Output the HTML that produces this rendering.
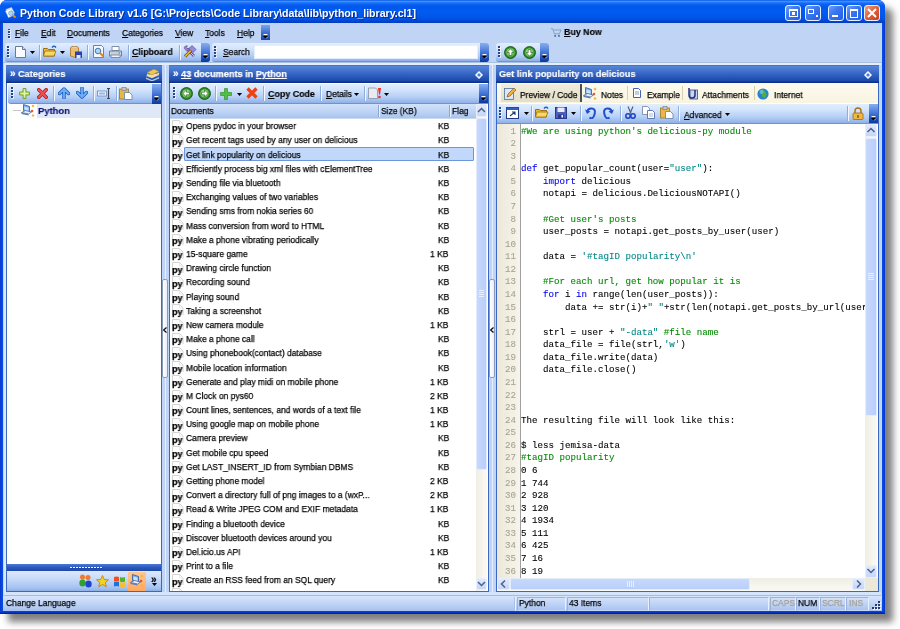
<!DOCTYPE html><html><head><meta charset="utf-8"><style>
*{margin:0;padding:0;box-sizing:border-box}
html,body{width:900px;height:629px;overflow:hidden;background:#fff;-webkit-font-smoothing:antialiased;font-family:"Liberation Sans",sans-serif;color:#000}
.a{position:absolute}
.t{white-space:pre;transform-origin:0 50%;will-change:transform;-webkit-text-stroke:0.25px currentColor}
u{text-decoration:underline;text-underline-offset:1px}
.code{position:absolute;font-family:"Liberation Mono",monospace;font-size:9.17px;line-height:12px;white-space:pre;-webkit-text-stroke:0.1px currentColor;will-change:transform}
.tb{background:linear-gradient(#e3eefe 0%,#d3e4fc 30%,#b4cef5 70%,#8fb1e8 100%);border-bottom:1px solid #6e92d2}
.chev{background:linear-gradient(#86aef0 0%,#4a7ad8 45%,#1c4eb8 80%,#0c3a9a 100%)}
.hdr{background:linear-gradient(#3060c0 0px,#5686d8 1px,#4272cc 6px,#2c5cbc 11px,#1c48a8 16px,#0a3090 17px,#0a3090 18px)}
.sep{position:absolute;width:2px;background:#8eaee0;border-right:1px solid #f4f8ff}
</style></head><body><div class="a " style="left:0px;top:0px;width:885px;height:614px;background:#0a3bd6;border-radius:7px 7px 0 0;box-shadow:8px 8px 7px rgba(0,0,0,0.5)"></div><div class="a " style="left:0px;top:0px;width:885px;height:23px;border-radius:7px 7px 0 0;background:linear-gradient(#0a5ae8 0px,#3a90ff 1.5px,#1a6cf8 3px,#0058ec 6px,#005cf2 12px,#0052e4 19px,#0040c8 22px,#0038c0 23px)"></div><div class="a " style="left:0px;top:23px;width:3px;height:591px;background:linear-gradient(90deg,#0a3ad0,#0650e8)"></div><div class="a " style="left:882px;top:23px;width:3px;height:591px;background:linear-gradient(90deg,#0650e8,#0a36c8)"></div><div class="a " style="left:0px;top:611px;width:885px;height:3px;background:linear-gradient(#0a48e0,#0030c0 60%,#001c98)"></div><div class="a " style="left:3px;top:23px;width:879px;height:588px;background:#c0d5f6"></div><svg class="a" style="left:5px;top:6px" width="13" height="13" viewBox="0 0 13 13"><path d="M1 3.5L6.5 1.5 9.5 7 4 10z" fill="#f4f6fc" stroke="#b8c4d8" stroke-width="0.6"/><path d="M0.5 5L6 3l3 6-5.5 2.5z" fill="#fff" stroke="#c0cce0" stroke-width="0.6"/><circle cx="5.8" cy="7.2" r="2.2" fill="#a8dcfc" stroke="#7aa0c8" stroke-width="0.8"/><path d="M7.6 9l3 2.5" stroke="#f08a10" stroke-width="2"/></svg><div class="a t" style="left:20px;top:7px;font-size:10.6px;line-height:12.6px;font-weight:bold;color:#fff;transform:scaleX(1);-webkit-text-stroke:0.15px currentColor;text-shadow:1px 1px 0 #0a2a90;-webkit-text-stroke:0">Python Code Library v1.6 [G:\Projects\Code Library\data\lib\python_library.cl1]</div><div class="a " style="left:785px;top:5px;width:16px;height:16px;border:1px solid #e8f0ff;border-radius:3px;background:linear-gradient(135deg,#6e9ff8 0%,#3d78f0 40%,#1f5ee8 100%)"></div><div class="a " style="left:805px;top:5px;width:16px;height:16px;border:1px solid #e8f0ff;border-radius:3px;background:linear-gradient(135deg,#6e9ff8 0%,#3d78f0 40%,#1f5ee8 100%)"></div><div class="a " style="left:828px;top:5px;width:16px;height:16px;border:1px solid #e8f0ff;border-radius:3px;background:linear-gradient(135deg,#6e9ff8 0%,#3d78f0 40%,#1f5ee8 100%)"></div><div class="a " style="left:846px;top:5px;width:16px;height:16px;border:1px solid #e8f0ff;border-radius:3px;background:linear-gradient(135deg,#6e9ff8 0%,#3d78f0 40%,#1f5ee8 100%)"></div><div class="a " style="left:864px;top:5px;width:16px;height:16px;border:1px solid #e8f0ff;border-radius:3px;background:linear-gradient(135deg,#f0a080 0%,#e06038 50%,#c84018 100%)"></div><div class="a " style="left:789px;top:9px;width:9px;height:8px;border:1.5px solid #fff;border-top-width:2px"></div><div class="a " style="left:792px;top:12px;width:3px;height:2.5px;background:#fff"></div><div class="a " style="left:808px;top:9px;width:6px;height:5px;border:1px solid #fff;background:#3a70e8;border-top-width:1.5px"></div><div class="a " style="left:815.5px;top:14.5px;width:2.5px;height:2.5px;background:#fff"></div><div class="a " style="left:831.5px;top:14.5px;width:6px;height:2.5px;background:#fff"></div><div class="a " style="left:849.5px;top:9px;width:8px;height:8.5px;border:1px solid #fff;border-top:2.5px solid #fff"></div><svg class="a" style="left:864px;top:5px" width="16" height="16"><path d="M4 4L12 12M12 4L4 12" stroke="#fff" stroke-width="2"/></svg><div class="a " style="left:7.5px;top:28.5px;width:2px;height:1.6px;background:#27458f;box-shadow:0.8px 0.8px 0 #fff"></div><div class="a " style="left:7.5px;top:31.0px;width:2px;height:1.6px;background:#27458f;box-shadow:0.8px 0.8px 0 #fff"></div><div class="a " style="left:7.5px;top:33.5px;width:2px;height:1.6px;background:#27458f;box-shadow:0.8px 0.8px 0 #fff"></div><div class="a " style="left:7.5px;top:36.0px;width:2px;height:1.6px;background:#27458f;box-shadow:0.8px 0.8px 0 #fff"></div><div class="a t" style="left:15px;top:27px;font-size:9.5px;line-height:11.5px;font-weight:normal;color:#000;transform:scaleX(0.89);"><u>F</u>ile</div><div class="a t" style="left:40.5px;top:27px;font-size:9.5px;line-height:11.5px;font-weight:normal;color:#000;transform:scaleX(0.89);"><u>E</u>dit</div><div class="a t" style="left:67px;top:27px;font-size:9.5px;line-height:11.5px;font-weight:normal;color:#000;transform:scaleX(0.89);"><u>D</u>ocuments</div><div class="a t" style="left:121.5px;top:27px;font-size:9.5px;line-height:11.5px;font-weight:normal;color:#000;transform:scaleX(0.89);"><u>C</u>ategories</div><div class="a t" style="left:175px;top:27px;font-size:9.5px;line-height:11.5px;font-weight:normal;color:#000;transform:scaleX(0.89);"><u>V</u>iew</div><div class="a t" style="left:205px;top:27px;font-size:9.5px;line-height:11.5px;font-weight:normal;color:#000;transform:scaleX(0.89);"><u>T</u>ools</div><div class="a t" style="left:237px;top:27px;font-size:9.5px;line-height:11.5px;font-weight:normal;color:#000;transform:scaleX(0.89);"><u>H</u>elp</div><div class="a " style="left:261px;top:25px;width:9px;height:15px;background:linear-gradient(#7aa4ec,#3566c8 60%,#1a46a8)"></div><svg class="a" style="left:262px;top:33.5px" width="7" height="6"><path d="M1.5 0.5h4" stroke="#fff" stroke-width="1"/><path d="M1 2h5L3.5 4.8z" fill="#000"/><path d="M4 4.5L6 2.5" stroke="#fff" stroke-width="0.6"/></svg><svg class="a" style="left:550px;top:27px" width="12" height="11" viewBox="0 0 14 13"><path d="M1 2h2l2 6h6l2-4.5H4" fill="none" stroke="#7a9ab8" stroke-width="1"/><circle cx="6" cy="10.5" r="1.2" fill="#5a7a98"/><circle cx="10.5" cy="10.5" r="1.2" fill="#5a7a98"/></svg><div class="a t" style="left:564px;top:25.8px;font-size:9.5px;line-height:11.5px;font-weight:bold;color:#000;transform:scaleX(0.93);-webkit-text-stroke:0.15px currentColor;"><u>B</u>uy Now</div><div class="a tb" style="left:5px;top:43px;width:205px;height:19px;border-radius:3px"></div><div class="a chev" style="left:201px;top:43px;width:9px;height:19px;border-radius:0 3px 3px 0"></div><svg class="a" style="left:202px;top:54px" width="7" height="6"><path d="M1.5 0.5h4" stroke="#fff" stroke-width="1"/><path d="M1 2h5L3.5 4.8z" fill="#000"/><path d="M4 4.5L6 2.5" stroke="#fff" stroke-width="0.6"/></svg><div class="a " style="left:7px;top:46.0px;width:2px;height:1.6px;background:#27458f;box-shadow:0.8px 0.8px 0 #fff"></div><div class="a " style="left:7px;top:49.1px;width:2px;height:1.6px;background:#27458f;box-shadow:0.8px 0.8px 0 #fff"></div><div class="a " style="left:7px;top:52.2px;width:2px;height:1.6px;background:#27458f;box-shadow:0.8px 0.8px 0 #fff"></div><div class="a " style="left:7px;top:55.3px;width:2px;height:1.6px;background:#27458f;box-shadow:0.8px 0.8px 0 #fff"></div><svg class="a" style="left:15px;top:46px" width="11" height="12"><path d="M0.5 0.5h7l3 3v8h-10z" fill="#fafcff" stroke="#6a7a90"/><path d="M7.5 0.5v3h3" fill="#d0d8e8" stroke="#6a7a90"/></svg><svg class="a" style="left:30px;top:51px" width="5" height="3"><path d="M0 0h5L2.5 3z" fill="#000"/></svg><div class="sep" style="left:39px;top:45px;height:15px"></div><svg class="a" style="left:43px;top:45px" width="14" height="12"><path d="M0.5 3.5h4l1 1h6v6.5h-11z" fill="#e8b830" stroke="#a07010"/><path d="M2 6h11l-2 5H0.5z" fill="#f8d860" stroke="#a07010" stroke-width="0.8"/><path d="M9 2.5q2-2.5 4 0" fill="none" stroke="#2060c0" stroke-width="1.3"/></svg><svg class="a" style="left:60px;top:51px" width="5" height="3"><path d="M0 0h5L2.5 3z" fill="#000"/></svg><svg class="a" style="left:70px;top:46px" width="12" height="12"><ellipse cx="4.5" cy="2" rx="4" ry="1.8" fill="#f0d090" stroke="#a07030" stroke-width="0.8"/><path d="M0.5 2v8q4 2.5 8 0V2" fill="#e8c070" stroke="#a07030" stroke-width="0.8"/><rect x="5" y="5.5" width="7" height="6.5" fill="#3040a8"/><rect x="6.5" y="9" width="4" height="3" fill="#e0e8f8"/></svg><div class="sep" style="left:87px;top:45px;height:15px"></div><svg class="a" style="left:93px;top:45px" width="12" height="13"><path d="M0.5 0.5h8l2 2v10h-10z" fill="#f4f8ff" stroke="#7080a0"/><circle cx="5" cy="6" r="2.8" fill="#a8d8f8" stroke="#4878a8"/><path d="M7 8l3.5 3.5" stroke="#e08020" stroke-width="1.8"/></svg><svg class="a" style="left:109px;top:46px" width="13" height="12"><path d="M3 0.5h7v4H3z" fill="#fff" stroke="#8090a8"/><path d="M0.5 5h12v5h-12z" fill="#c8d0dc" stroke="#7080a0"/><path d="M2 9h9v2.5H2z" fill="#f0f4f8" stroke="#8090a8"/><rect x="9.5" y="6.5" width="1.5" height="1" fill="#30a030"/></svg><div class="sep" style="left:128px;top:45px;height:15px"></div><div class="a t" style="left:132px;top:46.2px;font-size:9.5px;line-height:11.5px;font-weight:bold;color:#000;transform:scaleX(0.92);-webkit-text-stroke:0.15px currentColor;"><u>C</u>lipboard</div><div class="sep" style="left:179px;top:45px;height:15px"></div><svg class="a" style="left:183px;top:45px" width="14" height="13"><path d="M3.5 3.5L11 11" stroke="#6a5aa8" stroke-width="2.6"/><path d="M3.5 3.5L11 11" stroke="#c8c0f0" stroke-width="1"/><path d="M1 3A3 3 0 0 1 4.5 0.8L3.2 2.5 4.8 4 6.5 2.8A3 3 0 0 1 3.5 6z" fill="#9a88d8" stroke="#5a4a98" stroke-width="0.6"/><path d="M2 11.5L8 5.5" stroke="#403000" stroke-width="3"/><path d="M2 11.5L8 5.5" stroke="#f0b020" stroke-width="1.8"/><path d="M6 3.5L9 0.5 13 4.5 10 7.5z" fill="#9a88d8" stroke="#5a4a98" stroke-width="0.7"/></svg><div class="a tb" style="left:212px;top:43px;width:277px;height:19px;border-radius:3px"></div><div class="a chev" style="left:480px;top:43px;width:9px;height:19px;border-radius:0 3px 3px 0"></div><svg class="a" style="left:481px;top:54px" width="7" height="6"><path d="M1.5 0.5h4" stroke="#fff" stroke-width="1"/><path d="M1 2h5L3.5 4.8z" fill="#000"/><path d="M4 4.5L6 2.5" stroke="#fff" stroke-width="0.6"/></svg><div class="a " style="left:214px;top:46.0px;width:2px;height:1.6px;background:#27458f;box-shadow:0.8px 0.8px 0 #fff"></div><div class="a " style="left:214px;top:49.1px;width:2px;height:1.6px;background:#27458f;box-shadow:0.8px 0.8px 0 #fff"></div><div class="a " style="left:214px;top:52.2px;width:2px;height:1.6px;background:#27458f;box-shadow:0.8px 0.8px 0 #fff"></div><div class="a " style="left:214px;top:55.3px;width:2px;height:1.6px;background:#27458f;box-shadow:0.8px 0.8px 0 #fff"></div><div class="a t" style="left:223px;top:46.2px;font-size:9.5px;line-height:11.5px;font-weight:normal;color:#000;transform:scaleX(0.89);"><u>S</u>earch</div><div class="a " style="left:254px;top:45px;width:224px;height:14px;background:#fff;border:1px solid #e4eefc"></div><div class="a tb" style="left:496px;top:43px;width:53px;height:19px;border-radius:3px"></div><div class="a chev" style="left:540px;top:43px;width:9px;height:19px;border-radius:0 3px 3px 0"></div><svg class="a" style="left:541px;top:54px" width="7" height="6"><path d="M1.5 0.5h4" stroke="#fff" stroke-width="1"/><path d="M1 2h5L3.5 4.8z" fill="#000"/><path d="M4 4.5L6 2.5" stroke="#fff" stroke-width="0.6"/></svg><div class="a " style="left:498px;top:46.0px;width:2px;height:1.6px;background:#27458f;box-shadow:0.8px 0.8px 0 #fff"></div><div class="a " style="left:498px;top:49.1px;width:2px;height:1.6px;background:#27458f;box-shadow:0.8px 0.8px 0 #fff"></div><div class="a " style="left:498px;top:52.2px;width:2px;height:1.6px;background:#27458f;box-shadow:0.8px 0.8px 0 #fff"></div><div class="a " style="left:498px;top:55.3px;width:2px;height:1.6px;background:#27458f;box-shadow:0.8px 0.8px 0 #fff"></div><svg class="a" style="left:504px;top:46px" width="13" height="13"><defs><radialGradient id="gc" cx="0.45" cy="0.4" r="0.6"><stop offset="0" stop-color="#d8f8b0"/><stop offset="1" stop-color="#60b040"/></radialGradient></defs><circle cx="6.5" cy="6.5" r="6" fill="#2a8a2a" stroke="#0c500c" stroke-width="0.8"/><circle cx="6.5" cy="6.5" r="4.3" fill="url(#gc)"/><path d="M6.5 2.8L3 6.5h2.2v3h2.6v-3H10z" fill="#fff" stroke="#2a6a2a" stroke-width="0.7"/></svg><svg class="a" style="left:522.5px;top:46px" width="13" height="13"><defs><radialGradient id="gc" cx="0.45" cy="0.4" r="0.6"><stop offset="0" stop-color="#d8f8b0"/><stop offset="1" stop-color="#60b040"/></radialGradient></defs><circle cx="6.5" cy="6.5" r="6" fill="#2a8a2a" stroke="#0c500c" stroke-width="0.8"/><circle cx="6.5" cy="6.5" r="4.3" fill="url(#gc)"/><path d="M6.5 10.2L3 6.5h2.2v-3h2.6v3H10z" fill="#fff" stroke="#2a6a2a" stroke-width="0.7"/></svg><div class="a " style="left:3px;top:62px;width:879px;height:1px;background:#a8c0e4"></div><div class="a " style="left:4px;top:63px;width:877px;height:2px;background:#e2eefc"></div><div class="a " style="left:4px;top:592px;width:877px;height:4px;background:#d4e4fa;border-bottom:1px solid #a4bce4"></div><div class="a " style="left:4px;top:63px;width:2px;height:532px;background:#dceafc"></div><div class="a " style="left:164.5px;top:65px;width:1.5px;height:527px;background:#e6eefc"></div><div class="a " style="left:491.5px;top:65px;width:1.5px;height:527px;background:#e6eefc"></div><div class="a " style="left:6px;top:65px;width:156px;height:527px;background:#fff;border:1px solid #3b68c4"></div><div class="a hdr" style="left:6px;top:65px;width:156px;height:18px;"></div><div class="a t" style="left:9.5px;top:67.8px;font-size:10px;line-height:12px;font-weight:bold;color:#fff;transform:scaleX(1);-webkit-text-stroke:0.15px currentColor;">»</div><div class="a t" style="left:18px;top:67.8px;font-size:9.8px;line-height:11.8px;font-weight:bold;color:#fff;transform:scaleX(0.935);-webkit-text-stroke:0.15px currentColor;">Categories</div><svg class="a" style="left:145px;top:68px" width="15" height="13"><path d="M1 8l7-3 6 2-7 3z" fill="#e0e8f0" stroke="#8090a0" stroke-width="0.6"/><path d="M1 9.5l6 2.5 7-3v1.5l-7 3-6-2.5z" fill="#b8c8d8"/><path d="M2 4.5l7-3.5 5 2.5-7 3.5z" fill="#f0c850" stroke="#b08020" stroke-width="0.6"/><path d="M2 5.5l5 2.5 7-3.5v2l-7 3.5-5-2.5z" fill="#f8e0a0"/></svg><div class="a tb" style="left:8px;top:84px;width:153px;height:20px;border-radius:3px 0 0 3px"></div><div class="a chev" style="left:152px;top:84px;width:9px;height:20px;"></div><svg class="a" style="left:153px;top:96px" width="7" height="6"><path d="M1.5 0.5h4" stroke="#fff" stroke-width="1"/><path d="M1 2h5L3.5 4.8z" fill="#000"/><path d="M4 4.5L6 2.5" stroke="#fff" stroke-width="0.6"/></svg><div class="a " style="left:11px;top:87.0px;width:2px;height:1.6px;background:#27458f;box-shadow:0.8px 0.8px 0 #fff"></div><div class="a " style="left:11px;top:90.1px;width:2px;height:1.6px;background:#27458f;box-shadow:0.8px 0.8px 0 #fff"></div><div class="a " style="left:11px;top:93.2px;width:2px;height:1.6px;background:#27458f;box-shadow:0.8px 0.8px 0 #fff"></div><div class="a " style="left:11px;top:96.3px;width:2px;height:1.6px;background:#27458f;box-shadow:0.8px 0.8px 0 #fff"></div><svg class="a" style="left:18.5px;top:88px" width="11" height="11"><path d="M4 0.5h3v3.5h3.5v3H7v3.5H4V7H0.5V4H4z" fill="#c8e070" stroke="#78a830" stroke-width="1"/><path d="M5.5 2v7M2 5.5h7" stroke="#e8f0b0" stroke-width="1"/></svg><svg class="a" style="left:37px;top:88px" width="11" height="11"><path d="M1.8 1.8L9.2 9.2M9.2 1.8L1.8 9.2" stroke="#c01818" stroke-width="3.6" stroke-linecap="round"/><path d="M1.8 1.8L9.2 9.2M9.2 1.8L1.8 9.2" stroke="#f05050" stroke-width="2" stroke-linecap="round"/></svg><div class="sep" style="left:53px;top:86px;height:15px"></div><svg class="a" style="left:58px;top:87px" width="12" height="12"><path d="M1.5 6.5L6 2 10.5 6.5M6 2.5V11" fill="none" stroke="#1a58c0" stroke-width="3.4" stroke-linecap="round" stroke-linejoin="round"/><path d="M1.5 6.5L6 2 10.5 6.5M6 2.5V11" fill="none" stroke="#6ab0f8" stroke-width="1.8" stroke-linecap="round" stroke-linejoin="round"/></svg><svg class="a" style="left:76px;top:87px" width="12" height="12"><path d="M1.5 5.5L6 10 10.5 5.5M6 9.5V1" fill="none" stroke="#1a58c0" stroke-width="3.4" stroke-linecap="round" stroke-linejoin="round"/><path d="M1.5 5.5L6 10 10.5 5.5M6 9.5V1" fill="none" stroke="#6ab0f8" stroke-width="1.8" stroke-linecap="round" stroke-linejoin="round"/></svg><div class="sep" style="left:93px;top:86px;height:15px"></div><svg class="a" style="left:97px;top:88px" width="14" height="11"><rect x="0.5" y="3" width="9" height="5" fill="#f0f4fa" stroke="#7088b0" stroke-width="0.8"/><rect x="2" y="4.5" width="6" height="2" fill="#90b8f0"/><path d="M10 0.5h3M10 10.5h3M11.5 0.5v10" stroke="#404858" stroke-width="1.2"/></svg><div class="sep" style="left:116px;top:86px;height:15px"></div><svg class="a" style="left:119px;top:87px" width="14" height="13"><rect x="0.5" y="2" width="9" height="10" fill="#e8b848" stroke="#a07820" stroke-width="0.8"/><rect x="3" y="0.5" width="4" height="3" fill="#c0c8d0" stroke="#707880" stroke-width="0.6"/><path d="M5.5 5.5h5l2.5 2.5v4.5h-7.5z" fill="#fff" stroke="#6080a8" stroke-width="0.8"/></svg><div class="a " style="left:37px;top:104px;width:124px;height:14px;background:#dfe8f6"></div><div class="a " style="left:13px;top:110px;width:8px;height:1px;background:#c8c8c8"></div><svg class="a" style="left:21px;top:104px" width="15" height="14"><path d="M2.5 0.5l6 2v6l-6-2z" fill="#78b0f0" stroke="#2a5aa8" stroke-width="0.8"/><path d="M3.5 2.5l4 1.3v3.5l-4-1.3z" fill="#c8e4ff"/><path d="M0.5 8.5l7 1.5 3-2-6-1.5z" fill="#e8f0f8" stroke="#3a5a98" stroke-width="0.7"/><path d="M0.5 8.5l7 1.5v1.5l-7-1.5z" fill="#6080b8"/><path d="M12 0.5l1.5 1.5-1.5 1.5-1.5-1.5z" fill="#f8b030"/><path d="M11 5.5l1.5 1.5-1.5 1.5-1.5-1.5z" fill="#e04820"/><path d="M12 10l1.5 1.5-1.5 1.5-1.5-1.5z" fill="#f8b030"/></svg><div class="a t" style="left:38px;top:105.2px;font-size:9.8px;line-height:11.8px;font-weight:bold;color:#10107a;transform:scaleX(0.96);-webkit-text-stroke:0.15px currentColor;">Python</div><div class="a " style="left:7px;top:564px;width:154px;height:7px;background:linear-gradient(#4a7ad8,#2a58bc 50%,#1e48a8)"></div><div class="a " style="left:70px;top:566.5px;width:1.6px;height:1.6px;background:#f4f8ff;box-shadow:0.5px 0.5px 0 #10308a"></div><div class="a " style="left:73px;top:566.5px;width:1.6px;height:1.6px;background:#f4f8ff;box-shadow:0.5px 0.5px 0 #10308a"></div><div class="a " style="left:76px;top:566.5px;width:1.6px;height:1.6px;background:#f4f8ff;box-shadow:0.5px 0.5px 0 #10308a"></div><div class="a " style="left:79px;top:566.5px;width:1.6px;height:1.6px;background:#f4f8ff;box-shadow:0.5px 0.5px 0 #10308a"></div><div class="a " style="left:82px;top:566.5px;width:1.6px;height:1.6px;background:#f4f8ff;box-shadow:0.5px 0.5px 0 #10308a"></div><div class="a " style="left:85px;top:566.5px;width:1.6px;height:1.6px;background:#f4f8ff;box-shadow:0.5px 0.5px 0 #10308a"></div><div class="a " style="left:88px;top:566.5px;width:1.6px;height:1.6px;background:#f4f8ff;box-shadow:0.5px 0.5px 0 #10308a"></div><div class="a " style="left:91px;top:566.5px;width:1.6px;height:1.6px;background:#f4f8ff;box-shadow:0.5px 0.5px 0 #10308a"></div><div class="a " style="left:94px;top:566.5px;width:1.6px;height:1.6px;background:#f4f8ff;box-shadow:0.5px 0.5px 0 #10308a"></div><div class="a " style="left:97px;top:566.5px;width:1.6px;height:1.6px;background:#f4f8ff;box-shadow:0.5px 0.5px 0 #10308a"></div><div class="a " style="left:100px;top:566.5px;width:1.6px;height:1.6px;background:#f4f8ff;box-shadow:0.5px 0.5px 0 #10308a"></div><div class="a " style="left:7px;top:571px;width:154px;height:20px;background:linear-gradient(#dde9fc 0%,#c6daf8 40%,#a4c2f0 85%,#8cb0e6 100%)"></div><div class="a " style="left:128px;top:572px;width:18px;height:19px;background:linear-gradient(#ffc890,#ffa860)"></div><svg class="a" style="left:79px;top:574px" width="13" height="14"><circle cx="3.5" cy="3" r="2.5" fill="#f07a30"/><circle cx="9" cy="3.5" r="2.5" fill="#f07a30"/><ellipse cx="3.5" cy="9" rx="3.2" ry="3.5" fill="#30a030"/><ellipse cx="9.5" cy="10" rx="3.2" ry="3.5" fill="#2040d0"/></svg><svg class="a" style="left:96px;top:575px" width="13" height="13"><path d="M6.5 0.5l1.8 4 4.2 0.3-3.2 2.8 1 4.2-3.8-2.3-3.8 2.3 1-4.2L0.5 4.8l4.2-0.3z" fill="#f8d020" stroke="#b08010" stroke-width="0.8"/></svg><svg class="a" style="left:113px;top:575px" width="13" height="13"><path d="M1 2q2.5-1 5 0v4.5q-2.5-1-5 0z" fill="#f05020"/><path d="M7 2q2.5 1 5 0v4.5q-2.5 1-5 0z" fill="#50b030"/><path d="M1 7q2.5-1 5 0v4.5q-2.5-1-5 0z" fill="#2070e0"/><path d="M7 7q2.5 1 5 0v4.5q-2.5 1-5 0z" fill="#f8c020"/></svg><svg class="a" style="left:130px;top:574px" width="15" height="14"><path d="M2.5 0.5l6 2v6l-6-2z" fill="#78b0f0" stroke="#2a5aa8" stroke-width="0.8"/><path d="M3.5 2.5l4 1.3v3.5l-4-1.3z" fill="#c8e4ff"/><path d="M0.5 8.5l7 1.5 3-2-6-1.5z" fill="#e8f0f8" stroke="#3a5a98" stroke-width="0.7"/><path d="M0.5 8.5l7 1.5v1.5l-7-1.5z" fill="#6080b8"/><path d="M12 0.5l1.5 1.5-1.5 1.5-1.5-1.5z" fill="#f8b030"/><path d="M11 5.5l1.5 1.5-1.5 1.5-1.5-1.5z" fill="#e04820"/><path d="M12 10l1.5 1.5-1.5 1.5-1.5-1.5z" fill="#f8b030"/></svg><div class="a t" style="left:151px;top:573.5px;font-size:10px;line-height:12px;font-weight:bold;color:#000;transform:scaleX(1);-webkit-text-stroke:0.15px currentColor;">»</div><svg class="a" style="left:152px;top:583px" width="5" height="3"><path d="M0 0h5L2.5 3z" fill="#000"/></svg><div class="a " style="left:162px;top:279px;width:6px;height:99px;background:linear-gradient(90deg,#fff,#e8eef8);border:1px solid #8a9ab8;border-radius:2px"></div><svg class="a" style="left:163px;top:327px" width="4" height="6"><path d="M3.5 0.5L0.5 3l3 2.5" fill="none" stroke="#000" stroke-width="1.2"/></svg><div class="a " style="left:169px;top:65px;width:320px;height:527px;background:#fff;border:1px solid #3b68c4"></div><div class="a hdr" style="left:169px;top:65px;width:320px;height:18px;"></div><div class="a t" style="left:172.5px;top:67.6px;font-size:10px;line-height:12px;font-weight:bold;color:#fff;transform:scaleX(1);-webkit-text-stroke:0.15px currentColor;">»</div><div class="a t" style="left:181px;top:67.6px;font-size:9.8px;line-height:11.8px;font-weight:bold;color:#fff;transform:scaleX(0.935)"><u>43</u> documents in <u>Python</u></div><svg class="a" style="left:473.5px;top:70px" width="10" height="10"><path d="M5 1L9 5 5 9 1 5z" fill="#fff"/><path d="M5 3L7 5 5 7 3 5z" fill="#4a80e0"/></svg><div class="a tb" style="left:170px;top:84px;width:318px;height:20px;"></div><div class="a chev" style="left:479px;top:84px;width:9px;height:19px;"></div><svg class="a" style="left:480px;top:96px" width="7" height="6"><path d="M1.5 0.5h4" stroke="#fff" stroke-width="1"/><path d="M1 2h5L3.5 4.8z" fill="#000"/><path d="M4 4.5L6 2.5" stroke="#fff" stroke-width="0.6"/></svg><div class="a " style="left:173px;top:87.0px;width:2px;height:1.6px;background:#27458f;box-shadow:0.8px 0.8px 0 #fff"></div><div class="a " style="left:173px;top:90.1px;width:2px;height:1.6px;background:#27458f;box-shadow:0.8px 0.8px 0 #fff"></div><div class="a " style="left:173px;top:93.2px;width:2px;height:1.6px;background:#27458f;box-shadow:0.8px 0.8px 0 #fff"></div><div class="a " style="left:173px;top:96.3px;width:2px;height:1.6px;background:#27458f;box-shadow:0.8px 0.8px 0 #fff"></div><svg class="a" style="left:180px;top:87px" width="13" height="13"><defs><radialGradient id="gc" cx="0.45" cy="0.4" r="0.6"><stop offset="0" stop-color="#d8f8b0"/><stop offset="1" stop-color="#60b040"/></radialGradient></defs><circle cx="6.5" cy="6.5" r="6" fill="#2a8a2a" stroke="#0c500c" stroke-width="0.8"/><circle cx="6.5" cy="6.5" r="4.3" fill="url(#gc)"/><path d="M2.8 6.5L6.5 3v2.2h3v2.6h-3V10z" fill="#fff" stroke="#2a6a2a" stroke-width="0.7"/></svg><svg class="a" style="left:198px;top:87px" width="13" height="13"><defs><radialGradient id="gc" cx="0.45" cy="0.4" r="0.6"><stop offset="0" stop-color="#d8f8b0"/><stop offset="1" stop-color="#60b040"/></radialGradient></defs><circle cx="6.5" cy="6.5" r="6" fill="#2a8a2a" stroke="#0c500c" stroke-width="0.8"/><circle cx="6.5" cy="6.5" r="4.3" fill="url(#gc)"/><path d="M10.2 6.5L6.5 3v2.2h-3v2.6h3V10z" fill="#fff" stroke="#2a6a2a" stroke-width="0.7"/></svg><div class="sep" style="left:215px;top:86px;height:15px"></div><svg class="a" style="left:220px;top:88px" width="12" height="12"><path d="M4.5 0.5h3v4h4v3h-4v4h-3v-4h-4v-3h4z" fill="#50c040" stroke="#2a8a20" stroke-width="0.6"/></svg><svg class="a" style="left:237px;top:93px" width="5" height="3"><path d="M0 0h5L2.5 3z" fill="#000"/></svg><svg class="a" style="left:246px;top:87px" width="12" height="12"><path d="M1.5 1.5L10.5 10.5M10.5 1.5L1.5 10.5" stroke="#f04010" stroke-width="3.2"/></svg><div class="sep" style="left:263px;top:86px;height:15px"></div><div class="a t" style="left:268px;top:88px;font-size:9.5px;line-height:11.5px;font-weight:bold;color:#000;transform:scaleX(0.935);-webkit-text-stroke:0.15px currentColor;"><u>C</u>opy Code</div><div class="sep" style="left:320px;top:86px;height:15px"></div><div class="a t" style="left:326px;top:88px;font-size:9.5px;line-height:11.5px;font-weight:normal;color:#000;transform:scaleX(0.89);"><u>D</u>etails</div><svg class="a" style="left:354px;top:93px" width="5" height="3"><path d="M0 0h5L2.5 3z" fill="#000"/></svg><div class="sep" style="left:364px;top:86px;height:15px"></div><svg class="a" style="left:368px;top:87px" width="14" height="12"><path d="M0.5 1h7l2 2v8.5h-9z" fill="#e8ecf0" stroke="#8890a0" stroke-width="0.8"/><path d="M10 1h3l-1 6.5h-1z" fill="#f03020"/><circle cx="11.5" cy="10" r="1.3" fill="#f03020"/></svg><svg class="a" style="left:384px;top:93px" width="5" height="3"><path d="M0 0h5L2.5 3z" fill="#000"/></svg><div class="a " style="left:170px;top:104px;width:306px;height:15px;background:linear-gradient(#d2e2fa,#bcd2f4 60%,#a8c4ee);border-bottom:1px solid #c8d8f0"></div><div class="a " style="left:378px;top:105px;width:1px;height:12px;background:#8aa8d8;border-right:1px solid #e8f0fc;width:2px"></div><div class="a " style="left:449px;top:105px;width:1px;height:12px;background:#8aa8d8;border-right:1px solid #e8f0fc;width:2px"></div><div class="a t" style="left:171px;top:105px;font-size:9.5px;line-height:11.5px;font-weight:normal;color:#000;transform:scaleX(0.89);">Documents</div><div class="a t" style="left:381px;top:105px;font-size:9.5px;line-height:11.5px;font-weight:normal;color:#000;transform:scaleX(0.89);">Size (KB)</div><div class="a t" style="left:452px;top:105px;font-size:9.5px;line-height:11.5px;font-weight:normal;color:#000;transform:scaleX(0.89);">Flag</div><div class="a" style="left:170px;top:118px;width:306px;height:473px;overflow:hidden"><svg class="a" style="left:1px;top:1.00px" width="14" height="13"><path d="M1.5 12V1.5h7l3.5 3.5V12" fill="none" stroke="#d4d4d4" stroke-width="1"/><path d="M8.5 1.5v3.5h3.5" fill="none" stroke="#e4e4e4" stroke-width="0.8"/></svg><div class="a t" style="left:2px;top:3.60px;font-size:9.5px;line-height:11px;font-weight:bold;transform:scaleX(0.95)">py</div><div class="a t" style="left:15.5px;top:2.30px;font-size:9.5px;line-height:11px;transform:scaleX(0.89)">Opens pydoc in your browser</div><div class="a t" style="left:268px;top:2.30px;font-size:9.5px;line-height:11px;transform:scaleX(0.89)">KB</div><svg class="a" style="left:1px;top:15.19px" width="14" height="13"><path d="M1.5 12V1.5h7l3.5 3.5V12" fill="none" stroke="#d4d4d4" stroke-width="1"/><path d="M8.5 1.5v3.5h3.5" fill="none" stroke="#e4e4e4" stroke-width="0.8"/></svg><div class="a t" style="left:2px;top:17.79px;font-size:9.5px;line-height:11px;font-weight:bold;transform:scaleX(0.95)">py</div><div class="a t" style="left:15.5px;top:16.49px;font-size:9.5px;line-height:11px;transform:scaleX(0.89)">Get recent tags used by any user on delicious</div><div class="a t" style="left:268px;top:16.49px;font-size:9.5px;line-height:11px;transform:scaleX(0.89)">KB</div><div class="a" style="left:14px;top:28.88px;width:290px;height:14px;background:#c2d8fb;border:1px solid #6a96e0;border-radius:1px"></div><svg class="a" style="left:1px;top:29.38px" width="14" height="13"><path d="M1.5 12V1.5h7l3.5 3.5V12" fill="none" stroke="#d4d4d4" stroke-width="1"/><path d="M8.5 1.5v3.5h3.5" fill="none" stroke="#e4e4e4" stroke-width="0.8"/></svg><div class="a t" style="left:2px;top:31.98px;font-size:9.5px;line-height:11px;font-weight:bold;transform:scaleX(0.95)">py</div><div class="a t" style="left:15.5px;top:30.68px;font-size:9.5px;line-height:11px;transform:scaleX(0.89)">Get link popularity on delicious</div><div class="a t" style="left:268px;top:30.68px;font-size:9.5px;line-height:11px;transform:scaleX(0.89)">KB</div><svg class="a" style="left:1px;top:43.57px" width="14" height="13"><path d="M1.5 12V1.5h7l3.5 3.5V12" fill="none" stroke="#d4d4d4" stroke-width="1"/><path d="M8.5 1.5v3.5h3.5" fill="none" stroke="#e4e4e4" stroke-width="0.8"/></svg><div class="a t" style="left:2px;top:46.17px;font-size:9.5px;line-height:11px;font-weight:bold;transform:scaleX(0.95)">py</div><div class="a t" style="left:15.5px;top:44.87px;font-size:9.5px;line-height:11px;transform:scaleX(0.89)">Efficiently process big xml files with cElementTree</div><div class="a t" style="left:268px;top:44.87px;font-size:9.5px;line-height:11px;transform:scaleX(0.89)">KB</div><svg class="a" style="left:1px;top:57.76px" width="14" height="13"><path d="M1.5 12V1.5h7l3.5 3.5V12" fill="none" stroke="#d4d4d4" stroke-width="1"/><path d="M8.5 1.5v3.5h3.5" fill="none" stroke="#e4e4e4" stroke-width="0.8"/></svg><div class="a t" style="left:2px;top:60.36px;font-size:9.5px;line-height:11px;font-weight:bold;transform:scaleX(0.95)">py</div><div class="a t" style="left:15.5px;top:59.06px;font-size:9.5px;line-height:11px;transform:scaleX(0.89)">Sending file via bluetooth</div><div class="a t" style="left:268px;top:59.06px;font-size:9.5px;line-height:11px;transform:scaleX(0.89)">KB</div><svg class="a" style="left:1px;top:71.95px" width="14" height="13"><path d="M1.5 12V1.5h7l3.5 3.5V12" fill="none" stroke="#d4d4d4" stroke-width="1"/><path d="M8.5 1.5v3.5h3.5" fill="none" stroke="#e4e4e4" stroke-width="0.8"/></svg><div class="a t" style="left:2px;top:74.55px;font-size:9.5px;line-height:11px;font-weight:bold;transform:scaleX(0.95)">py</div><div class="a t" style="left:15.5px;top:73.25px;font-size:9.5px;line-height:11px;transform:scaleX(0.89)">Exchanging values of two variables</div><div class="a t" style="left:268px;top:73.25px;font-size:9.5px;line-height:11px;transform:scaleX(0.89)">KB</div><svg class="a" style="left:1px;top:86.14px" width="14" height="13"><path d="M1.5 12V1.5h7l3.5 3.5V12" fill="none" stroke="#d4d4d4" stroke-width="1"/><path d="M8.5 1.5v3.5h3.5" fill="none" stroke="#e4e4e4" stroke-width="0.8"/></svg><div class="a t" style="left:2px;top:88.74px;font-size:9.5px;line-height:11px;font-weight:bold;transform:scaleX(0.95)">py</div><div class="a t" style="left:15.5px;top:87.44px;font-size:9.5px;line-height:11px;transform:scaleX(0.89)">Sending sms from nokia series 60</div><div class="a t" style="left:268px;top:87.44px;font-size:9.5px;line-height:11px;transform:scaleX(0.89)">KB</div><svg class="a" style="left:1px;top:100.33px" width="14" height="13"><path d="M1.5 12V1.5h7l3.5 3.5V12" fill="none" stroke="#d4d4d4" stroke-width="1"/><path d="M8.5 1.5v3.5h3.5" fill="none" stroke="#e4e4e4" stroke-width="0.8"/></svg><div class="a t" style="left:2px;top:102.93px;font-size:9.5px;line-height:11px;font-weight:bold;transform:scaleX(0.95)">py</div><div class="a t" style="left:15.5px;top:101.63px;font-size:9.5px;line-height:11px;transform:scaleX(0.89)">Mass conversion from word to HTML</div><div class="a t" style="left:268px;top:101.63px;font-size:9.5px;line-height:11px;transform:scaleX(0.89)">KB</div><svg class="a" style="left:1px;top:114.52px" width="14" height="13"><path d="M1.5 12V1.5h7l3.5 3.5V12" fill="none" stroke="#d4d4d4" stroke-width="1"/><path d="M8.5 1.5v3.5h3.5" fill="none" stroke="#e4e4e4" stroke-width="0.8"/></svg><div class="a t" style="left:2px;top:117.12px;font-size:9.5px;line-height:11px;font-weight:bold;transform:scaleX(0.95)">py</div><div class="a t" style="left:15.5px;top:115.82px;font-size:9.5px;line-height:11px;transform:scaleX(0.89)">Make a phone vibrating periodically</div><div class="a t" style="left:268px;top:115.82px;font-size:9.5px;line-height:11px;transform:scaleX(0.89)">KB</div><svg class="a" style="left:1px;top:128.71px" width="14" height="13"><path d="M1.5 12V1.5h7l3.5 3.5V12" fill="none" stroke="#d4d4d4" stroke-width="1"/><path d="M8.5 1.5v3.5h3.5" fill="none" stroke="#e4e4e4" stroke-width="0.8"/></svg><div class="a t" style="left:2px;top:131.31px;font-size:9.5px;line-height:11px;font-weight:bold;transform:scaleX(0.95)">py</div><div class="a t" style="left:15.5px;top:130.01px;font-size:9.5px;line-height:11px;transform:scaleX(0.89)">15-square game</div><div class="a t" style="left:259.5px;top:130.01px;font-size:9.5px;line-height:11px;transform:scaleX(0.89)">1 KB</div><svg class="a" style="left:1px;top:142.90px" width="14" height="13"><path d="M1.5 12V1.5h7l3.5 3.5V12" fill="none" stroke="#d4d4d4" stroke-width="1"/><path d="M8.5 1.5v3.5h3.5" fill="none" stroke="#e4e4e4" stroke-width="0.8"/></svg><div class="a t" style="left:2px;top:145.50px;font-size:9.5px;line-height:11px;font-weight:bold;transform:scaleX(0.95)">py</div><div class="a t" style="left:15.5px;top:144.20px;font-size:9.5px;line-height:11px;transform:scaleX(0.89)">Drawing circle function</div><div class="a t" style="left:268px;top:144.20px;font-size:9.5px;line-height:11px;transform:scaleX(0.89)">KB</div><svg class="a" style="left:1px;top:157.09px" width="14" height="13"><path d="M1.5 12V1.5h7l3.5 3.5V12" fill="none" stroke="#d4d4d4" stroke-width="1"/><path d="M8.5 1.5v3.5h3.5" fill="none" stroke="#e4e4e4" stroke-width="0.8"/></svg><div class="a t" style="left:2px;top:159.69px;font-size:9.5px;line-height:11px;font-weight:bold;transform:scaleX(0.95)">py</div><div class="a t" style="left:15.5px;top:158.39px;font-size:9.5px;line-height:11px;transform:scaleX(0.89)">Recording sound</div><div class="a t" style="left:268px;top:158.39px;font-size:9.5px;line-height:11px;transform:scaleX(0.89)">KB</div><svg class="a" style="left:1px;top:171.28px" width="14" height="13"><path d="M1.5 12V1.5h7l3.5 3.5V12" fill="none" stroke="#d4d4d4" stroke-width="1"/><path d="M8.5 1.5v3.5h3.5" fill="none" stroke="#e4e4e4" stroke-width="0.8"/></svg><div class="a t" style="left:2px;top:173.88px;font-size:9.5px;line-height:11px;font-weight:bold;transform:scaleX(0.95)">py</div><div class="a t" style="left:15.5px;top:172.58px;font-size:9.5px;line-height:11px;transform:scaleX(0.89)">Playing sound</div><div class="a t" style="left:268px;top:172.58px;font-size:9.5px;line-height:11px;transform:scaleX(0.89)">KB</div><svg class="a" style="left:1px;top:185.47px" width="14" height="13"><path d="M1.5 12V1.5h7l3.5 3.5V12" fill="none" stroke="#d4d4d4" stroke-width="1"/><path d="M8.5 1.5v3.5h3.5" fill="none" stroke="#e4e4e4" stroke-width="0.8"/></svg><div class="a t" style="left:2px;top:188.07px;font-size:9.5px;line-height:11px;font-weight:bold;transform:scaleX(0.95)">py</div><div class="a t" style="left:15.5px;top:186.77px;font-size:9.5px;line-height:11px;transform:scaleX(0.89)">Taking a screenshot</div><div class="a t" style="left:268px;top:186.77px;font-size:9.5px;line-height:11px;transform:scaleX(0.89)">KB</div><svg class="a" style="left:1px;top:199.66px" width="14" height="13"><path d="M1.5 12V1.5h7l3.5 3.5V12" fill="none" stroke="#d4d4d4" stroke-width="1"/><path d="M8.5 1.5v3.5h3.5" fill="none" stroke="#e4e4e4" stroke-width="0.8"/></svg><div class="a t" style="left:2px;top:202.26px;font-size:9.5px;line-height:11px;font-weight:bold;transform:scaleX(0.95)">py</div><div class="a t" style="left:15.5px;top:200.96px;font-size:9.5px;line-height:11px;transform:scaleX(0.89)">New camera module</div><div class="a t" style="left:259.5px;top:200.96px;font-size:9.5px;line-height:11px;transform:scaleX(0.89)">1 KB</div><svg class="a" style="left:1px;top:213.85px" width="14" height="13"><path d="M1.5 12V1.5h7l3.5 3.5V12" fill="none" stroke="#d4d4d4" stroke-width="1"/><path d="M8.5 1.5v3.5h3.5" fill="none" stroke="#e4e4e4" stroke-width="0.8"/></svg><div class="a t" style="left:2px;top:216.45px;font-size:9.5px;line-height:11px;font-weight:bold;transform:scaleX(0.95)">py</div><div class="a t" style="left:15.5px;top:215.15px;font-size:9.5px;line-height:11px;transform:scaleX(0.89)">Make a phone call</div><div class="a t" style="left:268px;top:215.15px;font-size:9.5px;line-height:11px;transform:scaleX(0.89)">KB</div><svg class="a" style="left:1px;top:228.04px" width="14" height="13"><path d="M1.5 12V1.5h7l3.5 3.5V12" fill="none" stroke="#d4d4d4" stroke-width="1"/><path d="M8.5 1.5v3.5h3.5" fill="none" stroke="#e4e4e4" stroke-width="0.8"/></svg><div class="a t" style="left:2px;top:230.64px;font-size:9.5px;line-height:11px;font-weight:bold;transform:scaleX(0.95)">py</div><div class="a t" style="left:15.5px;top:229.34px;font-size:9.5px;line-height:11px;transform:scaleX(0.89)">Using phonebook(contact) database</div><div class="a t" style="left:268px;top:229.34px;font-size:9.5px;line-height:11px;transform:scaleX(0.89)">KB</div><svg class="a" style="left:1px;top:242.23px" width="14" height="13"><path d="M1.5 12V1.5h7l3.5 3.5V12" fill="none" stroke="#d4d4d4" stroke-width="1"/><path d="M8.5 1.5v3.5h3.5" fill="none" stroke="#e4e4e4" stroke-width="0.8"/></svg><div class="a t" style="left:2px;top:244.83px;font-size:9.5px;line-height:11px;font-weight:bold;transform:scaleX(0.95)">py</div><div class="a t" style="left:15.5px;top:243.53px;font-size:9.5px;line-height:11px;transform:scaleX(0.89)">Mobile location information</div><div class="a t" style="left:268px;top:243.53px;font-size:9.5px;line-height:11px;transform:scaleX(0.89)">KB</div><svg class="a" style="left:1px;top:256.42px" width="14" height="13"><path d="M1.5 12V1.5h7l3.5 3.5V12" fill="none" stroke="#d4d4d4" stroke-width="1"/><path d="M8.5 1.5v3.5h3.5" fill="none" stroke="#e4e4e4" stroke-width="0.8"/></svg><div class="a t" style="left:2px;top:259.02px;font-size:9.5px;line-height:11px;font-weight:bold;transform:scaleX(0.95)">py</div><div class="a t" style="left:15.5px;top:257.72px;font-size:9.5px;line-height:11px;transform:scaleX(0.89)">Generate and play midi on mobile phone</div><div class="a t" style="left:259.5px;top:257.72px;font-size:9.5px;line-height:11px;transform:scaleX(0.89)">1 KB</div><svg class="a" style="left:1px;top:270.61px" width="14" height="13"><path d="M1.5 12V1.5h7l3.5 3.5V12" fill="none" stroke="#d4d4d4" stroke-width="1"/><path d="M8.5 1.5v3.5h3.5" fill="none" stroke="#e4e4e4" stroke-width="0.8"/></svg><div class="a t" style="left:2px;top:273.21px;font-size:9.5px;line-height:11px;font-weight:bold;transform:scaleX(0.95)">py</div><div class="a t" style="left:15.5px;top:271.91px;font-size:9.5px;line-height:11px;transform:scaleX(0.89)">M Clock on pys60</div><div class="a t" style="left:259.5px;top:271.91px;font-size:9.5px;line-height:11px;transform:scaleX(0.89)">2 KB</div><svg class="a" style="left:1px;top:284.80px" width="14" height="13"><path d="M1.5 12V1.5h7l3.5 3.5V12" fill="none" stroke="#d4d4d4" stroke-width="1"/><path d="M8.5 1.5v3.5h3.5" fill="none" stroke="#e4e4e4" stroke-width="0.8"/></svg><div class="a t" style="left:2px;top:287.40px;font-size:9.5px;line-height:11px;font-weight:bold;transform:scaleX(0.95)">py</div><div class="a t" style="left:15.5px;top:286.10px;font-size:9.5px;line-height:11px;transform:scaleX(0.89)">Count lines, sentences, and words of a text file</div><div class="a t" style="left:259.5px;top:286.10px;font-size:9.5px;line-height:11px;transform:scaleX(0.89)">1 KB</div><svg class="a" style="left:1px;top:298.99px" width="14" height="13"><path d="M1.5 12V1.5h7l3.5 3.5V12" fill="none" stroke="#d4d4d4" stroke-width="1"/><path d="M8.5 1.5v3.5h3.5" fill="none" stroke="#e4e4e4" stroke-width="0.8"/></svg><div class="a t" style="left:2px;top:301.59px;font-size:9.5px;line-height:11px;font-weight:bold;transform:scaleX(0.95)">py</div><div class="a t" style="left:15.5px;top:300.29px;font-size:9.5px;line-height:11px;transform:scaleX(0.89)">Using google map on mobile phone</div><div class="a t" style="left:259.5px;top:300.29px;font-size:9.5px;line-height:11px;transform:scaleX(0.89)">1 KB</div><svg class="a" style="left:1px;top:313.18px" width="14" height="13"><path d="M1.5 12V1.5h7l3.5 3.5V12" fill="none" stroke="#d4d4d4" stroke-width="1"/><path d="M8.5 1.5v3.5h3.5" fill="none" stroke="#e4e4e4" stroke-width="0.8"/></svg><div class="a t" style="left:2px;top:315.78px;font-size:9.5px;line-height:11px;font-weight:bold;transform:scaleX(0.95)">py</div><div class="a t" style="left:15.5px;top:314.48px;font-size:9.5px;line-height:11px;transform:scaleX(0.89)">Camera preview</div><div class="a t" style="left:268px;top:314.48px;font-size:9.5px;line-height:11px;transform:scaleX(0.89)">KB</div><svg class="a" style="left:1px;top:327.37px" width="14" height="13"><path d="M1.5 12V1.5h7l3.5 3.5V12" fill="none" stroke="#d4d4d4" stroke-width="1"/><path d="M8.5 1.5v3.5h3.5" fill="none" stroke="#e4e4e4" stroke-width="0.8"/></svg><div class="a t" style="left:2px;top:329.97px;font-size:9.5px;line-height:11px;font-weight:bold;transform:scaleX(0.95)">py</div><div class="a t" style="left:15.5px;top:328.67px;font-size:9.5px;line-height:11px;transform:scaleX(0.89)">Get mobile cpu speed</div><div class="a t" style="left:268px;top:328.67px;font-size:9.5px;line-height:11px;transform:scaleX(0.89)">KB</div><svg class="a" style="left:1px;top:341.56px" width="14" height="13"><path d="M1.5 12V1.5h7l3.5 3.5V12" fill="none" stroke="#d4d4d4" stroke-width="1"/><path d="M8.5 1.5v3.5h3.5" fill="none" stroke="#e4e4e4" stroke-width="0.8"/></svg><div class="a t" style="left:2px;top:344.16px;font-size:9.5px;line-height:11px;font-weight:bold;transform:scaleX(0.95)">py</div><div class="a t" style="left:15.5px;top:342.86px;font-size:9.5px;line-height:11px;transform:scaleX(0.89)">Get LAST_INSERT_ID from Symbian DBMS</div><div class="a t" style="left:268px;top:342.86px;font-size:9.5px;line-height:11px;transform:scaleX(0.89)">KB</div><svg class="a" style="left:1px;top:355.75px" width="14" height="13"><path d="M1.5 12V1.5h7l3.5 3.5V12" fill="none" stroke="#d4d4d4" stroke-width="1"/><path d="M8.5 1.5v3.5h3.5" fill="none" stroke="#e4e4e4" stroke-width="0.8"/></svg><div class="a t" style="left:2px;top:358.35px;font-size:9.5px;line-height:11px;font-weight:bold;transform:scaleX(0.95)">py</div><div class="a t" style="left:15.5px;top:357.05px;font-size:9.5px;line-height:11px;transform:scaleX(0.89)">Getting phone model</div><div class="a t" style="left:259.5px;top:357.05px;font-size:9.5px;line-height:11px;transform:scaleX(0.89)">2 KB</div><svg class="a" style="left:1px;top:369.94px" width="14" height="13"><path d="M1.5 12V1.5h7l3.5 3.5V12" fill="none" stroke="#d4d4d4" stroke-width="1"/><path d="M8.5 1.5v3.5h3.5" fill="none" stroke="#e4e4e4" stroke-width="0.8"/></svg><div class="a t" style="left:2px;top:372.54px;font-size:9.5px;line-height:11px;font-weight:bold;transform:scaleX(0.95)">py</div><div class="a t" style="left:15.5px;top:371.24px;font-size:9.5px;line-height:11px;transform:scaleX(0.89)">Convert a directory full of png images to a (wxP...</div><div class="a t" style="left:259.5px;top:371.24px;font-size:9.5px;line-height:11px;transform:scaleX(0.89)">2 KB</div><svg class="a" style="left:1px;top:384.13px" width="14" height="13"><path d="M1.5 12V1.5h7l3.5 3.5V12" fill="none" stroke="#d4d4d4" stroke-width="1"/><path d="M8.5 1.5v3.5h3.5" fill="none" stroke="#e4e4e4" stroke-width="0.8"/></svg><div class="a t" style="left:2px;top:386.73px;font-size:9.5px;line-height:11px;font-weight:bold;transform:scaleX(0.95)">py</div><div class="a t" style="left:15.5px;top:385.43px;font-size:9.5px;line-height:11px;transform:scaleX(0.89)">Read &amp; Write JPEG COM and EXIF metadata</div><div class="a t" style="left:259.5px;top:385.43px;font-size:9.5px;line-height:11px;transform:scaleX(0.89)">1 KB</div><svg class="a" style="left:1px;top:398.32px" width="14" height="13"><path d="M1.5 12V1.5h7l3.5 3.5V12" fill="none" stroke="#d4d4d4" stroke-width="1"/><path d="M8.5 1.5v3.5h3.5" fill="none" stroke="#e4e4e4" stroke-width="0.8"/></svg><div class="a t" style="left:2px;top:400.92px;font-size:9.5px;line-height:11px;font-weight:bold;transform:scaleX(0.95)">py</div><div class="a t" style="left:15.5px;top:399.62px;font-size:9.5px;line-height:11px;transform:scaleX(0.89)">Finding a bluetooth device</div><div class="a t" style="left:268px;top:399.62px;font-size:9.5px;line-height:11px;transform:scaleX(0.89)">KB</div><svg class="a" style="left:1px;top:412.51px" width="14" height="13"><path d="M1.5 12V1.5h7l3.5 3.5V12" fill="none" stroke="#d4d4d4" stroke-width="1"/><path d="M8.5 1.5v3.5h3.5" fill="none" stroke="#e4e4e4" stroke-width="0.8"/></svg><div class="a t" style="left:2px;top:415.11px;font-size:9.5px;line-height:11px;font-weight:bold;transform:scaleX(0.95)">py</div><div class="a t" style="left:15.5px;top:413.81px;font-size:9.5px;line-height:11px;transform:scaleX(0.89)">Discover bluetooth devices around you</div><div class="a t" style="left:268px;top:413.81px;font-size:9.5px;line-height:11px;transform:scaleX(0.89)">KB</div><svg class="a" style="left:1px;top:426.70px" width="14" height="13"><path d="M1.5 12V1.5h7l3.5 3.5V12" fill="none" stroke="#d4d4d4" stroke-width="1"/><path d="M8.5 1.5v3.5h3.5" fill="none" stroke="#e4e4e4" stroke-width="0.8"/></svg><div class="a t" style="left:2px;top:429.30px;font-size:9.5px;line-height:11px;font-weight:bold;transform:scaleX(0.95)">py</div><div class="a t" style="left:15.5px;top:428.00px;font-size:9.5px;line-height:11px;transform:scaleX(0.89)">Del.icio.us API</div><div class="a t" style="left:259.5px;top:428.00px;font-size:9.5px;line-height:11px;transform:scaleX(0.89)">1 KB</div><svg class="a" style="left:1px;top:440.89px" width="14" height="13"><path d="M1.5 12V1.5h7l3.5 3.5V12" fill="none" stroke="#d4d4d4" stroke-width="1"/><path d="M8.5 1.5v3.5h3.5" fill="none" stroke="#e4e4e4" stroke-width="0.8"/></svg><div class="a t" style="left:2px;top:443.49px;font-size:9.5px;line-height:11px;font-weight:bold;transform:scaleX(0.95)">py</div><div class="a t" style="left:15.5px;top:442.19px;font-size:9.5px;line-height:11px;transform:scaleX(0.89)">Print to a file</div><div class="a t" style="left:268px;top:442.19px;font-size:9.5px;line-height:11px;transform:scaleX(0.89)">KB</div><svg class="a" style="left:1px;top:455.08px" width="14" height="13"><path d="M1.5 12V1.5h7l3.5 3.5V12" fill="none" stroke="#d4d4d4" stroke-width="1"/><path d="M8.5 1.5v3.5h3.5" fill="none" stroke="#e4e4e4" stroke-width="0.8"/></svg><div class="a t" style="left:2px;top:457.68px;font-size:9.5px;line-height:11px;font-weight:bold;transform:scaleX(0.95)">py</div><div class="a t" style="left:15.5px;top:456.38px;font-size:9.5px;line-height:11px;transform:scaleX(0.89)">Create an RSS feed from an SQL query</div><div class="a t" style="left:268px;top:456.38px;font-size:9.5px;line-height:11px;transform:scaleX(0.89)">KB</div><svg class="a" style="left:1px;top:469.27px" width="14" height="13"><path d="M1.5 12V1.5h7l3.5 3.5V12" fill="none" stroke="#d4d4d4" stroke-width="1"/><path d="M8.5 1.5v3.5h3.5" fill="none" stroke="#e4e4e4" stroke-width="0.8"/></svg><div class="a t" style="left:2px;top:471.87px;font-size:9.5px;line-height:11px;font-weight:bold;transform:scaleX(0.95)">py</div><div class="a t" style="left:15.5px;top:470.57px;font-size:9.5px;line-height:11px;transform:scaleX(0.89)">Using a timer</div><div class="a t" style="left:268px;top:470.57px;font-size:9.5px;line-height:11px;transform:scaleX(0.89)">KB</div></div><div class="a " style="left:476px;top:104px;width:11px;height:487px;background:linear-gradient(90deg,#f0eee4,#fafaf4)"></div><div class="a " style="left:476px;top:104px;width:11px;height:13px;background:linear-gradient(#e0eafc,#c4d6fa);border:1px solid #e8eefc;border-radius:2px"></div><svg class="a" style="left:477px;top:107px" width="9" height="6"><path d="M1 5L4.5 1.5 8 5" fill="none" stroke="#4d6185" stroke-width="1.5"/></svg><div class="a " style="left:476px;top:118px;width:11px;height:352px;background:linear-gradient(90deg,#c8d8fc,#b8cefa);border:1px solid #e4ecfc;border-radius:2px"></div><div class="a " style="left:479px;top:290px;width:5px;height:1px;background:#e8f0ff"></div><div class="a " style="left:479px;top:292px;width:5px;height:1px;background:#e8f0ff"></div><div class="a " style="left:479px;top:294px;width:5px;height:1px;background:#e8f0ff"></div><div class="a " style="left:479px;top:296px;width:5px;height:1px;background:#e8f0ff"></div><div class="a " style="left:476px;top:578px;width:11px;height:12px;background:linear-gradient(#e0eafc,#c4d6fa);border:1px solid #e8eefc;border-radius:2px"></div><svg class="a" style="left:477px;top:581px" width="9" height="6"><path d="M1 1L4.5 4.5 8 1" fill="none" stroke="#4d6185" stroke-width="1.5"/></svg><div class="a " style="left:489px;top:279px;width:6px;height:99px;background:linear-gradient(90deg,#fff,#e8eef8);border:1px solid #8a9ab8;border-radius:2px"></div><svg class="a" style="left:490px;top:327px" width="4" height="6"><path d="M3.5 0.5L0.5 3l3 2.5" fill="none" stroke="#000" stroke-width="1.2"/></svg><div class="a " style="left:496px;top:65px;width:383px;height:527px;background:#fff;border:1px solid #3b68c4"></div><div class="a hdr" style="left:496px;top:65px;width:383px;height:18px;"></div><div class="a t" style="left:499px;top:67.6px;font-size:9.8px;line-height:11.8px;font-weight:bold;color:#fff;transform:scaleX(0.935);-webkit-text-stroke:0.15px currentColor;">Get link popularity on delicious</div><svg class="a" style="left:862.5px;top:70px" width="10" height="10"><path d="M5 1L9 5 5 9 1 5z" fill="#fff"/><path d="M5 3L7 5 5 7 3 5z" fill="#4a80e0"/></svg><div class="a " style="left:497px;top:83px;width:381px;height:20px;background:linear-gradient(#fdfbf0,#f8f4e0)"></div><div class="a " style="left:501px;top:84px;width:80px;height:18px;background:linear-gradient(#f0ecdc,#e4dfc8)"></div><div class="a " style="left:580px;top:84px;width:2px;height:18px;background:#505050"></div><svg class="a" style="left:504px;top:86.5px" width="12" height="13"><rect x="0.5" y="1.5" width="9" height="11" fill="#dce8f8" stroke="#50709c" stroke-width="0.8"/><path d="M3 10l1-3 6-6 2 2-6 6z" fill="#f0b040" stroke="#904010" stroke-width="0.6"/></svg><div class="a t" style="left:519.5px;top:89px;font-size:9.5px;line-height:11.5px;font-weight:normal;color:#000;transform:scaleX(0.89);">Preview / Code</div><svg class="a" style="left:583px;top:86.5px" width="15" height="14"><path d="M2.5 0.5l6 2v6l-6-2z" fill="#78b0f0" stroke="#2a5aa8" stroke-width="0.8"/><path d="M3.5 2.5l4 1.3v3.5l-4-1.3z" fill="#c8e4ff"/><path d="M0.5 8.5l7 1.5 3-2-6-1.5z" fill="#e8f0f8" stroke="#3a5a98" stroke-width="0.7"/><path d="M0.5 8.5l7 1.5v1.5l-7-1.5z" fill="#6080b8"/><path d="M12 0.5l1.5 1.5-1.5 1.5-1.5-1.5z" fill="#f8b030"/><path d="M11 5.5l1.5 1.5-1.5 1.5-1.5-1.5z" fill="#e04820"/><path d="M12 10l1.5 1.5-1.5 1.5-1.5-1.5z" fill="#f8b030"/></svg><div class="a t" style="left:601px;top:89px;font-size:9.5px;line-height:11.5px;font-weight:normal;color:#000;transform:scaleX(0.89);">Notes</div><div class="a " style="left:627px;top:86px;width:1px;height:14px;background:#d8d0b0"></div><svg class="a" style="left:633px;top:87.5px" width="8" height="10"><path d="M0.5 0.5h5l2 2v7h-7z" fill="#fff" stroke="#3050b0" stroke-width="0.9"/><path d="M2 4h4M2 6h4" stroke="#3050b0" stroke-width="0.6"/></svg><div class="a t" style="left:647px;top:89px;font-size:9.5px;line-height:11.5px;font-weight:normal;color:#000;transform:scaleX(0.89);">Example</div><div class="a " style="left:682px;top:86px;width:1px;height:14px;background:#d8d0b0"></div><svg class="a" style="left:686px;top:86.5px" width="12" height="13"><rect x="4" y="3" width="7.5" height="9" fill="#c8d8f0" stroke="#384878" stroke-width="0.8"/><path d="M3 1v7q0 3 3 3t3-3V3" fill="none" stroke="#203080" stroke-width="1.5"/></svg><div class="a t" style="left:702px;top:89px;font-size:9.5px;line-height:11.5px;font-weight:normal;color:#000;transform:scaleX(0.89);">Attachments</div><div class="a " style="left:754px;top:86px;width:1px;height:14px;background:#d8d0b0"></div><svg class="a" style="left:757px;top:87.5px" width="12" height="12"><circle cx="6" cy="6" r="5.6" fill="#2a80d0"/><path d="M3 2q3 1 2 4t3 4q2-2 1.5-4T6 1" fill="#4ab040"/><circle cx="4.5" cy="4" r="2" fill="#a0e0ff" opacity="0.5"/></svg><div class="a t" style="left:773.5px;top:89px;font-size:9.5px;line-height:11.5px;font-weight:normal;color:#000;transform:scaleX(0.89);">Internet</div><div class="a tb" style="left:497px;top:104px;width:381px;height:20px;"></div><div class="a chev" style="left:869px;top:104px;width:9px;height:19px;"></div><svg class="a" style="left:870px;top:116px" width="7" height="6"><path d="M1.5 0.5h4" stroke="#fff" stroke-width="1"/><path d="M1 2h5L3.5 4.8z" fill="#000"/><path d="M4 4.5L6 2.5" stroke="#fff" stroke-width="0.6"/></svg><div class="a " style="left:499px;top:107.0px;width:2px;height:1.6px;background:#27458f;box-shadow:0.8px 0.8px 0 #fff"></div><div class="a " style="left:499px;top:110.1px;width:2px;height:1.6px;background:#27458f;box-shadow:0.8px 0.8px 0 #fff"></div><div class="a " style="left:499px;top:113.2px;width:2px;height:1.6px;background:#27458f;box-shadow:0.8px 0.8px 0 #fff"></div><div class="a " style="left:499px;top:116.3px;width:2px;height:1.6px;background:#27458f;box-shadow:0.8px 0.8px 0 #fff"></div><svg class="a" style="left:506px;top:107px" width="13" height="12"><rect x="0.5" y="0.5" width="12" height="11" fill="#fff" stroke="#203880"/><rect x="0.5" y="0.5" width="12" height="2.5" fill="#3060c0"/><path d="M4 9l5-4M6 5h3v3" fill="none" stroke="#203880" stroke-width="1.1"/></svg><svg class="a" style="left:524px;top:112px" width="5" height="3"><path d="M0 0h5L2.5 3z" fill="#000"/></svg><div class="sep" style="left:531px;top:106px;height:15px"></div><svg class="a" style="left:535px;top:106px" width="14" height="12"><path d="M0.5 3.5h4l1 1h6v6.5h-11z" fill="#e8b830" stroke="#a07010"/><path d="M2 6h11l-2 5H0.5z" fill="#f8d860" stroke="#a07010" stroke-width="0.8"/><path d="M9 2.5q2-2.5 4 0" fill="none" stroke="#2060c0" stroke-width="1.3"/></svg><svg class="a" style="left:555px;top:107px" width="12" height="12"><rect x="0.5" y="0.5" width="11" height="11" fill="#5060b8" stroke="#283890"/><rect x="2.5" y="0.5" width="7" height="4.5" fill="#e8ecf8"/><rect x="3" y="7.5" width="6" height="4" fill="#283890"/><rect x="6.5" y="8" width="1.5" height="2.5" fill="#fff"/></svg><svg class="a" style="left:571px;top:112px" width="5" height="3"><path d="M0 0h5L2.5 3z" fill="#000"/></svg><div class="sep" style="left:580px;top:106px;height:15px"></div><svg class="a" style="left:585px;top:107px" width="11" height="12"><path d="M2 5q1-4 5-3.5t2.5 6-5 3" fill="none" stroke="#2050c8" stroke-width="2"/><path d="M0 2.5L2 7l3.5-2.5z" fill="#2050c8"/></svg><svg class="a" style="left:603px;top:107px" width="11" height="12"><path d="M9 5q-1-4-5-3.5t-2.5 6 5 3" fill="none" stroke="#2050c8" stroke-width="2"/><path d="M11 2.5L9 7 5.5 4.5z" fill="#2050c8"/></svg><div class="sep" style="left:620px;top:106px;height:15px"></div><svg class="a" style="left:625px;top:106px" width="11" height="13"><path d="M3 0.5l3 7M8 0.5l-3 7" stroke="#506080" stroke-width="1.2"/><circle cx="3" cy="10" r="2.2" fill="none" stroke="#1a40c0" stroke-width="1.5"/><circle cx="8" cy="10" r="2.2" fill="none" stroke="#1a40c0" stroke-width="1.5"/></svg><svg class="a" style="left:642px;top:106px" width="13" height="13"><path d="M0.5 0.5h5l2 2v6h-7z" fill="#fff" stroke="#7080a0" stroke-width="0.8"/><path d="M5.5 4.5h5l2 2v6h-7z" fill="#fff" stroke="#4060a0" stroke-width="0.8"/><path d="M7 8h4M7 10h4" stroke="#6a8ac0" stroke-width="0.6"/></svg><svg class="a" style="left:660px;top:106px" width="14" height="13"><rect x="0.5" y="2" width="9" height="10" fill="#e8b848" stroke="#a07820" stroke-width="0.8"/><rect x="3" y="0.5" width="4" height="3" fill="#c0c8d0" stroke="#707880" stroke-width="0.6"/><path d="M5.5 5.5h5l2.5 2.5v4.5h-7.5z" fill="#fff" stroke="#6080a8" stroke-width="0.8"/></svg><div class="sep" style="left:678px;top:106px;height:15px"></div><div class="a t" style="left:684px;top:108.5px;font-size:9.5px;line-height:11.5px;font-weight:normal;color:#000;transform:scaleX(0.89);"><u>A</u>dvanced</div><svg class="a" style="left:725px;top:113px" width="5" height="3"><path d="M0 0h5L2.5 3z" fill="#000"/></svg><div class="sep" style="left:847px;top:106px;height:15px"></div><svg class="a" style="left:852px;top:107px" width="12" height="13"><path d="M3 6V4q0-3 3-3t3 3v2" fill="none" stroke="#a87010" stroke-width="1.4"/><rect x="1" y="6" width="10" height="6.5" rx="1" fill="#f0b840" stroke="#a06810" stroke-width="0.8"/><rect x="5.5" y="8" width="1" height="3" fill="#503000"/></svg><div class="a " style="left:497px;top:124px;width:381px;height:467px;background:#fff"></div><div class="a " style="left:497px;top:124px;width:23px;height:454px;background:linear-gradient(90deg,#ebe8d8,#f2f0e4 60%,#f6f4ec)"></div><div class="a " style="left:520px;top:124px;width:1px;height:454px;background:#a0a0a0"></div><div class="a" style="left:497px;top:124px;width:368px;height:454px;overflow:hidden"><div class="code" style="left:-1.5px;top:1.60px;width:20px;text-align:right;color:#aaa392">1</div><div class="code" style="left:23.8px;top:1.60px"><span style="color:#008a00">#We are using python&#x27;s delicious-py module</span></div><div class="code" style="left:-1.5px;top:14.17px;width:20px;text-align:right;color:#aaa392">2</div><div class="code" style="left:-1.5px;top:26.74px;width:20px;text-align:right;color:#aaa392">3</div><div class="code" style="left:-1.5px;top:39.31px;width:20px;text-align:right;color:#aaa392">4</div><div class="code" style="left:23.8px;top:39.31px"><span style="color:#0000f0">def</span><span style="color:#000"> get_popular_count(user=</span><span style="color:#008888">&quot;user&quot;</span><span style="color:#000">):</span></div><div class="code" style="left:-1.5px;top:51.88px;width:20px;text-align:right;color:#aaa392">5</div><div class="code" style="left:23.8px;top:51.88px"><span style="color:#000">    </span><span style="color:#0000f0">import</span><span style="color:#000"> delicious</span></div><div class="code" style="left:-1.5px;top:64.45px;width:20px;text-align:right;color:#aaa392">6</div><div class="code" style="left:23.8px;top:64.45px"><span style="color:#000">    notapi = delicious.DeliciousNOTAPI()</span></div><div class="code" style="left:-1.5px;top:77.02px;width:20px;text-align:right;color:#aaa392">7</div><div class="code" style="left:-1.5px;top:89.59px;width:20px;text-align:right;color:#aaa392">8</div><div class="code" style="left:23.8px;top:89.59px"><span style="color:#008a00">    #Get user&#x27;s posts</span></div><div class="code" style="left:-1.5px;top:102.16px;width:20px;text-align:right;color:#aaa392">9</div><div class="code" style="left:23.8px;top:102.16px"><span style="color:#000">    user_posts = notapi.get_posts_by_user(user)</span></div><div class="code" style="left:-1.5px;top:114.73px;width:20px;text-align:right;color:#aaa392">10</div><div class="code" style="left:-1.5px;top:127.30px;width:20px;text-align:right;color:#aaa392">11</div><div class="code" style="left:23.8px;top:127.30px"><span style="color:#000">    data = </span><span style="color:#008888">&#x27;#tagID popularity\n&#x27;</span></div><div class="code" style="left:-1.5px;top:139.87px;width:20px;text-align:right;color:#aaa392">12</div><div class="code" style="left:-1.5px;top:152.44px;width:20px;text-align:right;color:#aaa392">13</div><div class="code" style="left:23.8px;top:152.44px"><span style="color:#008a00">    #For each url, get how popular it is</span></div><div class="code" style="left:-1.5px;top:165.01px;width:20px;text-align:right;color:#aaa392">14</div><div class="code" style="left:23.8px;top:165.01px"><span style="color:#000">    </span><span style="color:#0000f0">for</span><span style="color:#000"> i </span><span style="color:#0000f0">in</span><span style="color:#000"> range(len(user_posts)):</span></div><div class="code" style="left:-1.5px;top:177.58px;width:20px;text-align:right;color:#aaa392">15</div><div class="code" style="left:23.8px;top:177.58px"><span style="color:#000">        data += str(i)+</span><span style="color:#008888">&quot; &quot;</span><span style="color:#000">+str(len(notapi.get_posts_by_url(user</span></div><div class="code" style="left:-1.5px;top:190.15px;width:20px;text-align:right;color:#aaa392">16</div><div class="code" style="left:-1.5px;top:202.72px;width:20px;text-align:right;color:#aaa392">17</div><div class="code" style="left:23.8px;top:202.72px"><span style="color:#000">    strl = user + </span><span style="color:#008888">&quot;-data&quot;</span><span style="color:#008a00"> #file name</span></div><div class="code" style="left:-1.5px;top:215.29px;width:20px;text-align:right;color:#aaa392">18</div><div class="code" style="left:23.8px;top:215.29px"><span style="color:#000">    data_file = file(strl,</span><span style="color:#008888">&#x27;w&#x27;</span><span style="color:#000">)</span></div><div class="code" style="left:-1.5px;top:227.86px;width:20px;text-align:right;color:#aaa392">19</div><div class="code" style="left:23.8px;top:227.86px"><span style="color:#000">    data_file.write(data)</span></div><div class="code" style="left:-1.5px;top:240.43px;width:20px;text-align:right;color:#aaa392">20</div><div class="code" style="left:23.8px;top:240.43px"><span style="color:#000">    data_file.close()</span></div><div class="code" style="left:-1.5px;top:253.00px;width:20px;text-align:right;color:#aaa392">21</div><div class="code" style="left:-1.5px;top:265.57px;width:20px;text-align:right;color:#aaa392">22</div><div class="code" style="left:-1.5px;top:278.14px;width:20px;text-align:right;color:#aaa392">23</div><div class="code" style="left:-1.5px;top:290.71px;width:20px;text-align:right;color:#aaa392">24</div><div class="code" style="left:23.8px;top:290.71px"><span style="color:#000">The resulting file will look like this:</span></div><div class="code" style="left:-1.5px;top:303.28px;width:20px;text-align:right;color:#aaa392">25</div><div class="code" style="left:-1.5px;top:315.85px;width:20px;text-align:right;color:#aaa392">26</div><div class="code" style="left:23.8px;top:315.85px"><span style="color:#000">$ less jemisa-data</span></div><div class="code" style="left:-1.5px;top:328.42px;width:20px;text-align:right;color:#aaa392">27</div><div class="code" style="left:23.8px;top:328.42px"><span style="color:#008a00">#tagID popularity</span></div><div class="code" style="left:-1.5px;top:340.99px;width:20px;text-align:right;color:#aaa392">28</div><div class="code" style="left:23.8px;top:340.99px"><span style="color:#000">0 6</span></div><div class="code" style="left:-1.5px;top:353.56px;width:20px;text-align:right;color:#aaa392">29</div><div class="code" style="left:23.8px;top:353.56px"><span style="color:#000">1 744</span></div><div class="code" style="left:-1.5px;top:366.13px;width:20px;text-align:right;color:#aaa392">30</div><div class="code" style="left:23.8px;top:366.13px"><span style="color:#000">2 928</span></div><div class="code" style="left:-1.5px;top:378.70px;width:20px;text-align:right;color:#aaa392">31</div><div class="code" style="left:23.8px;top:378.70px"><span style="color:#000">3 120</span></div><div class="code" style="left:-1.5px;top:391.27px;width:20px;text-align:right;color:#aaa392">32</div><div class="code" style="left:23.8px;top:391.27px"><span style="color:#000">4 1934</span></div><div class="code" style="left:-1.5px;top:403.84px;width:20px;text-align:right;color:#aaa392">33</div><div class="code" style="left:23.8px;top:403.84px"><span style="color:#000">5 111</span></div><div class="code" style="left:-1.5px;top:416.41px;width:20px;text-align:right;color:#aaa392">34</div><div class="code" style="left:23.8px;top:416.41px"><span style="color:#000">6 425</span></div><div class="code" style="left:-1.5px;top:428.98px;width:20px;text-align:right;color:#aaa392">35</div><div class="code" style="left:23.8px;top:428.98px"><span style="color:#000">7 16</span></div><div class="code" style="left:-1.5px;top:441.55px;width:20px;text-align:right;color:#aaa392">36</div><div class="code" style="left:23.8px;top:441.55px"><span style="color:#000">8 19</span></div></div><div class="a " style="left:865px;top:124px;width:12px;height:454px;background:linear-gradient(90deg,#f0eee4,#fafaf4)"></div><div class="a " style="left:865px;top:124px;width:12px;height:13px;background:linear-gradient(#e0eafc,#c4d6fa);border:1px solid #e8eefc;border-radius:2px"></div><svg class="a" style="left:866px;top:127px" width="10" height="6"><path d="M1.5 5L5 1.5 8.5 5" fill="none" stroke="#4d6185" stroke-width="1.5"/></svg><div class="a " style="left:865px;top:138px;width:12px;height:278px;background:linear-gradient(90deg,#c8d8fc,#b8cefa);border:1px solid #e4ecfc;border-radius:2px"></div><div class="a " style="left:865px;top:565px;width:12px;height:13px;background:linear-gradient(#e0eafc,#c4d6fa);border:1px solid #e8eefc;border-radius:2px"></div><svg class="a" style="left:866px;top:568px" width="10" height="6"><path d="M1.5 1L5 4.5 8.5 1" fill="none" stroke="#4d6185" stroke-width="1.5"/></svg><div class="a " style="left:497px;top:578px;width:368px;height:13px;background:linear-gradient(#f0eee4,#fafaf4)"></div><div class="a " style="left:497px;top:578px;width:13px;height:12px;background:linear-gradient(#e0eafc,#c4d6fa);border:1px solid #e8eefc;border-radius:2px"></div><svg class="a" style="left:500px;top:579px" width="6" height="10"><path d="M5 1.5L1.5 5 5 8.5" fill="none" stroke="#4d6185" stroke-width="1.5"/></svg><div class="a " style="left:510px;top:578px;width:240px;height:12px;background:linear-gradient(#c8d8fc,#b8cefa);border:1px solid #e4ecfc;border-radius:2px"></div><div class="a " style="left:852px;top:578px;width:13px;height:12px;background:linear-gradient(#e0eafc,#c4d6fa);border:1px solid #e8eefc;border-radius:2px"></div><svg class="a" style="left:856px;top:579px" width="6" height="10"><path d="M1 1.5L4.5 5 1 8.5" fill="none" stroke="#4d6185" stroke-width="1.5"/></svg><div class="a " style="left:865px;top:578px;width:13px;height:13px;background:#ece9d8"></div><div class="a " style="left:868px;top:273px;width:6px;height:1px;background:#e8f0ff;border-bottom:0"></div><div class="a " style="left:868px;top:275px;width:6px;height:1px;background:#e8f0ff;border-bottom:0"></div><div class="a " style="left:868px;top:277px;width:6px;height:1px;background:#e8f0ff;border-bottom:0"></div><div class="a " style="left:868px;top:279px;width:6px;height:1px;background:#e8f0ff;border-bottom:0"></div><div class="a " style="left:627px;top:581px;width:1px;height:6px;background:#e8f0ff"></div><div class="a " style="left:629px;top:581px;width:1px;height:6px;background:#e8f0ff"></div><div class="a " style="left:631px;top:581px;width:1px;height:6px;background:#e8f0ff"></div><div class="a " style="left:633px;top:581px;width:1px;height:6px;background:#e8f0ff"></div><div class="a " style="left:3px;top:596px;width:879px;height:15px;background:linear-gradient(#d8e6fc,#c0d4f6 50%,#a8c2ee)"></div><div class="a t" style="left:6px;top:597px;font-size:9.5px;line-height:11.5px;font-weight:normal;color:#000;transform:scaleX(0.89);">Change Language</div><div class="a " style="left:514px;top:597px;width:2px;height:14px;background:#a8bee4;border-right:1px solid #eef4fe"></div><div class="a " style="left:517px;top:597px;width:49px;height:14px;border:1px solid #9ab2dc;border-right-color:#e8f0fc;border-bottom-color:#c8d8f4;border-radius:1px"></div><div class="a " style="left:567px;top:597px;width:82px;height:14px;border:1px solid #9ab2dc;border-right-color:#e8f0fc;border-bottom-color:#c8d8f4;border-radius:1px"></div><div class="a " style="left:649px;top:597px;width:120px;height:14px;border:1px solid #9ab2dc;border-right-color:#e8f0fc;border-bottom-color:#c8d8f4;border-radius:1px"></div><div class="a " style="left:770px;top:597px;width:26px;height:14px;border:1px solid #9ab2dc;border-right-color:#e8f0fc;border-bottom-color:#c8d8f4;border-radius:1px"></div><div class="a " style="left:796px;top:597px;width:24px;height:14px;border:1px solid #9ab2dc;border-right-color:#e8f0fc;border-bottom-color:#c8d8f4;border-radius:1px"></div><div class="a " style="left:820px;top:597px;width:26px;height:14px;border:1px solid #9ab2dc;border-right-color:#e8f0fc;border-bottom-color:#c8d8f4;border-radius:1px"></div><div class="a " style="left:846px;top:597px;width:23px;height:14px;border:1px solid #9ab2dc;border-right-color:#e8f0fc;border-bottom-color:#c8d8f4;border-radius:1px"></div><div class="a t" style="left:519px;top:597px;font-size:9.5px;line-height:11.5px;font-weight:normal;color:#000;transform:scaleX(0.89);">Python</div><div class="a t" style="left:569px;top:597px;font-size:9.5px;line-height:11.5px;font-weight:normal;color:#000;transform:scaleX(0.89);">43 Items</div><div class="a t" style="left:772px;top:597px;font-size:9.5px;line-height:11.5px;font-weight:normal;color:#a8a090;transform:scaleX(0.89);">CAPS</div><div class="a t" style="left:798px;top:597px;font-size:9.5px;line-height:11.5px;font-weight:normal;color:#000;transform:scaleX(0.89);">NUM</div><div class="a t" style="left:822px;top:597px;font-size:9.5px;line-height:11.5px;font-weight:normal;color:#a8a090;transform:scaleX(0.89);">SCRL</div><div class="a t" style="left:849px;top:597px;font-size:9.5px;line-height:11.5px;font-weight:normal;color:#a8a090;transform:scaleX(0.89);">INS</div><div class="a " style="left:878px;top:601px;width:2px;height:2px;background:#2a3a70;box-shadow:1px 1px 0 #f0f4ff"></div><div class="a " style="left:875px;top:604px;width:2px;height:2px;background:#2a3a70;box-shadow:1px 1px 0 #f0f4ff"></div><div class="a " style="left:878px;top:604px;width:2px;height:2px;background:#2a3a70;box-shadow:1px 1px 0 #f0f4ff"></div><div class="a " style="left:872px;top:607px;width:2px;height:2px;background:#2a3a70;box-shadow:1px 1px 0 #f0f4ff"></div><div class="a " style="left:875px;top:607px;width:2px;height:2px;background:#2a3a70;box-shadow:1px 1px 0 #f0f4ff"></div><div class="a " style="left:878px;top:607px;width:2px;height:2px;background:#2a3a70;box-shadow:1px 1px 0 #f0f4ff"></div></body></html>
